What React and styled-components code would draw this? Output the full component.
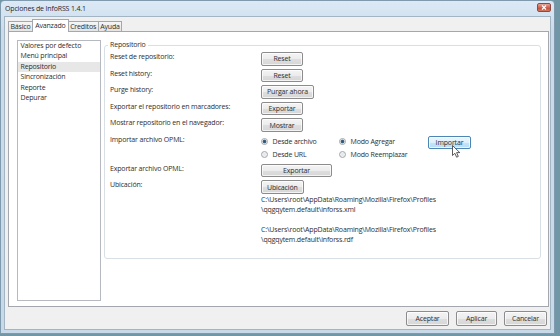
import React from "react";
import styled, { createGlobalStyle } from "styled-components";

const GlobalStyle = createGlobalStyle`
  html, body {
    margin: 0;
    padding: 0;
  }
  body {
    width: 560px;
    height: 336px;
    overflow: hidden;
    background: #7196a5;
    font-family: "Open Sans", "Noto Sans", sans-serif;
    font-size: 7px;
    letter-spacing: -0.16px;
    color: #2e2e2e;
  }
`;

const categories = [
  "Valores por defecto",
  "Menú principal",
  "Repositorio",
  "Sincronización",
  "Reporte",
  "Depurar",
];

const tabs = ["Básico", "Avanzado", "Creditos", "Ayuda"];

export default function App() {
  return (
    <>
      <GlobalStyle />
      <Window>
        <TitleBar>
          <Title>Opciones de InfoRSS 1.4.1</Title>
          <CloseButton>
            <svg width="6" height="5" viewBox="0 0 6 5">
              <path d="M1 0.5 L5 4.5 M5 0.5 L1 4.5" stroke="#fff" strokeWidth="1.2" />
            </svg>
          </CloseButton>
        </TitleBar>
        <Body>
          <TabBar>
            {tabs.map((t) => (
              <Tab key={t} $active={t === "Avanzado"}>
                {t}
              </Tab>
            ))}
          </TabBar>
          <Panel>
            <ListBox>
              {categories.map((c) => (
                <ListItem key={c} $selected={c === "Repositorio"}>
                  {c}
                </ListItem>
              ))}
            </ListBox>
            <Group>
              <Legend>Repositorio</Legend>
              <Rows>
                <Label>Reset de repositorio:</Label>
                <div>
                  <Button>Reset</Button>
                </div>
                <Label>Reset history:</Label>
                <div>
                  <Button>Reset</Button>
                </div>
                <Label>Purge history:</Label>
                <div>
                  <Button>Purgar ahora</Button>
                </div>
                <Label>Exportar el repositorio en marcadores:</Label>
                <div>
                  <Button>Exportar</Button>
                </div>
                <Label>Mostrar repositorio en el navegador:</Label>
                <div>
                  <Button>Mostrar</Button>
                </div>
                <Label>Importar archivo OPML:</Label>
                <RadioGrid>
                  <Radio checked>Desde archivo</Radio>
                  <Radio checked>Modo Agregar</Radio>
                  <ImportWrap>
                    <Button $hover $width={43}>
                      Importar
                    </Button>
                    <Cursor width="9" height="13" viewBox="0 0 9 13">
                      <path
                        d="M0.5 0.5 L0.5 10.5 L2.9 8.3 L4.6 12.2 L6.3 11.4 L4.6 7.6 L7.8 7.6 Z"
                        fill="#fff"
                        stroke="#333"
                        strokeWidth="0.8"
                        strokeLinejoin="round"
                      />
                    </Cursor>
                  </ImportWrap>
                  <Radio>Desde URL</Radio>
                  <Radio>Modo Reemplazar</Radio>
                </RadioGrid>
                <Label>Exportar archivo OPML:</Label>
                <div>
                  <Button $width={71}>Exportar</Button>
                </div>
                <Label>Ubicación:</Label>
                <Location>
                  <Button>Ubicación</Button>
                  <PathText>
                    C:\Users\root\AppData\Roaming\Mozilla\Firefox\Profiles
                    <br />
                    \qqgqytem.default\inforss.xml
                  </PathText>
                  <PathText $gap>
                    C:\Users\root\AppData\Roaming\Mozilla\Firefox\Profiles
                    <br />
                    \qqgqytem.default\inforss.rdf
                  </PathText>
                </Location>
              </Rows>
            </Group>
          </Panel>
          <Footer>
            <FooterButton $width={43}>Aceptar</FooterButton>
            <FooterButton $width={41}>Aplicar</FooterButton>
            <FooterButton $width={43}>Cancelar</FooterButton>
          </Footer>
        </Body>
      </Window>
    </>
  );
}

function Radio({ checked, children }) {
  return (
    <RadioRow>
      <RadioCircle $checked={checked} />
      <span>{children}</span>
    </RadioRow>
  );
}

const Window = styled.div`
  width: 555px;
  height: 334px;
  box-sizing: border-box;
  padding: 0 3px 3px;
  background: linear-gradient(#dde9f5, #cadcec 30px, #c8dae9);
  border: 1px solid #7f9aac;
  border-radius: 4px 4px 0 0;
  display: flex;
  flex-direction: column;
`;

const TitleBar = styled.div`
  height: 15px;
  display: flex;
  align-items: center;
  justify-content: space-between;
  padding-left: 1px;
`;

const Title = styled.span`
  color: #1d2733;
`;

const CloseButton = styled.div`
  width: 14px;
  height: 9px;
  margin-top: -2px;
  box-sizing: border-box;
  border: 1px solid #8d4a44;
  border-radius: 2px;
  background: linear-gradient(#e6a497, #cf6350 50%, #c04a36 51%, #d47a62);
  display: flex;
  align-items: center;
  justify-content: center;
`;

const Body = styled.div`
  flex: 1;
  display: flex;
  flex-direction: column;
  background: #f0f0f0;
  border: 1px solid #a3b5c2;
`;

const TabBar = styled.div`
  height: 15px;
  margin-bottom: -1px;
  padding-left: 4px;
  display: flex;
  align-items: flex-end;
  position: relative;
  z-index: 1;
`;

const Tab = styled.div`
  height: ${(p) => (p.$active ? "13px" : "10px")};
  margin-bottom: ${(p) => (p.$active ? "0" : "1px")};
  margin-left: -1px;
  padding: 0 ${(p) => (p.$active ? "2px" : "1.5px")};
  box-sizing: border-box;
  border: 1px solid #a4a7ae;
  border-bottom: none;
  background: ${(p) =>
    p.$active ? "#ffffff" : "linear-gradient(#f6f6f6, #e4e4e4)"};
  line-height: ${(p) => (p.$active ? "11px" : "9px")};
  white-space: nowrap;
`;

const Panel = styled.div`
  flex: 1;
  margin: 0 1px 0 3px;
  padding: 8px 7px 5px 8px;
  background: #ffffff;
  border: 1px solid #a4a7ae;
  display: flex;
  gap: 3px;
  align-items: stretch;
`;

const ListBox = styled.div`
  width: 84px;
  flex: none;
  box-sizing: border-box;
  border: 1px solid #b6b9bf;
`;

const ListItem = styled.div`
  line-height: 10.4px;
  padding-left: 2.5px;
  background: ${(p) => (p.$selected ? "#e7e7e7" : "transparent")};
  white-space: nowrap;
`;

const Group = styled.fieldset`
  flex: 1;
  min-width: 0;
  margin: 0;
  align-self: flex-start;
  padding: 2px 6px 13px 5px;
  border: 1px solid #d8e0e5;
  border-radius: 3px;
`;

const Legend = styled.legend`
  padding: 0 2px;
  margin-left: -2px;
  line-height: 10px;
`;

const Rows = styled.div`
  display: grid;
  grid-template-columns: 151px 1fr;
  row-gap: 3.1px;
  align-items: start;
`;

const Label = styled.div`
  line-height: 9px;
  white-space: nowrap;
`;

const Button = styled.div`
  display: inline-flex;
  align-items: center;
  justify-content: center;
  box-sizing: border-box;
  height: 13.5px;
  min-width: ${(p) => (p.$width ? `${p.$width}px` : "42px")};
  padding: 0 5px;
  border: 1px solid ${(p) => (p.$hover ? "#4d86b4" : "#8c8c8c")};
  border-radius: 2px;
  background: ${(p) =>
    p.$hover
      ? "linear-gradient(#ecf6fd, #dcf0fc 50%, #c4e5fa 51%, #b6dcf6)"
      : "linear-gradient(#f4f4f4, #ececec 50%, #dedede 51%, #d6d6d6)"};
  box-shadow: inset 0 0 0 1px rgba(255, 255, 255, 0.7);
  white-space: nowrap;
`;

const RadioGrid = styled.div`
  display: grid;
  grid-template-columns: 78px 89px auto;
  grid-auto-rows: 12.8px;
  align-items: center;
`;

const RadioRow = styled.div`
  display: flex;
  align-items: center;
  gap: 4.5px;
  white-space: nowrap;
`;

const RadioCircle = styled.span`
  width: 7px;
  height: 7px;
  box-sizing: border-box;
  border-radius: 50%;
  border: 1px solid #a2a7ad;
  background: ${(p) =>
    p.$checked
      ? "radial-gradient(circle, #2f4d6c 0, #3f6b92 1.6px, #e9eef2 2.2px, #f4f6f8 100%)"
      : "radial-gradient(circle, #e3e6e9 0, #f6f7f8 100%)"};
`;

const ImportWrap = styled.div`
  grid-row: span 2;
  align-self: start;
  margin-top: 0.7px;
  position: relative;
`;

const Cursor = styled.svg`
  position: absolute;
  left: 24px;
  top: 9px;
`;

const Location = styled.div`
  display: flex;
  flex-direction: column;
  align-items: flex-start;
`;

const PathText = styled.div`
  margin-top: ${(p) => (p.$gap ? "10px" : "1px")};
  line-height: 10px;
  white-space: nowrap;
`;

const Footer = styled.div`
  height: 22px;
  flex: none;
  display: flex;
  justify-content: flex-end;
  align-items: flex-start;
  gap: 7px;
  padding: 4px 3px 0 0;
  box-sizing: border-box;
`;

const FooterButton = styled(Button)`
  height: 15px;
  min-width: ${(p) => `${p.$width}px`};
`;
